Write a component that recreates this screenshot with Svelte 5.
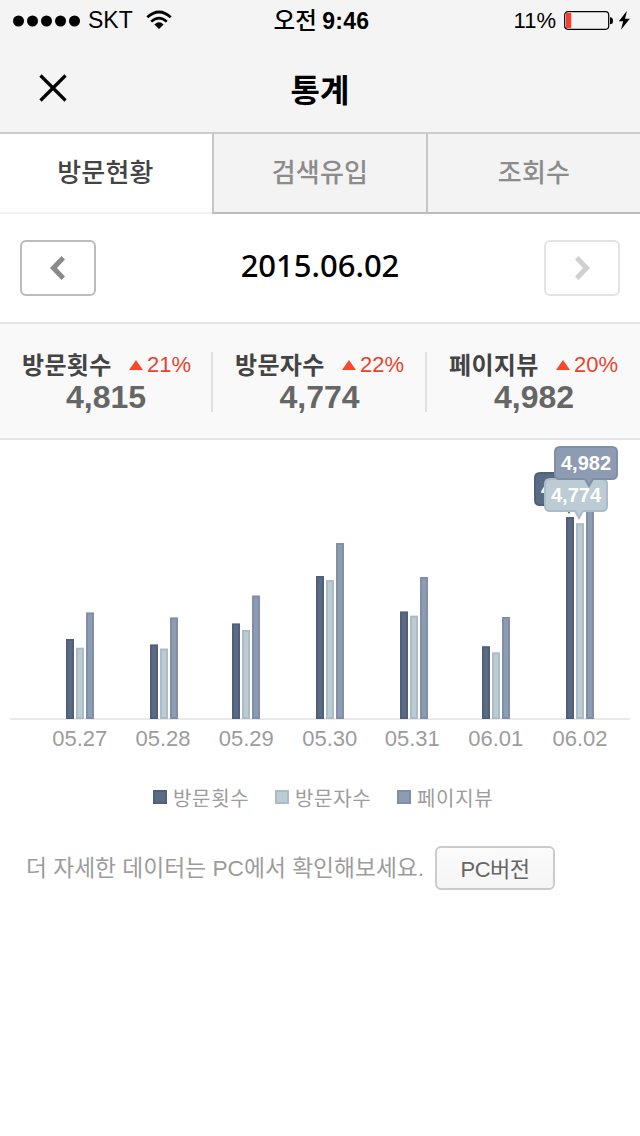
<script>
    const tabs = ['방문현황', '검색유입', '조회수'];
    let activeTab = $state(0);

    const summary = [
        { label: '방문횟수', rate: 21, value: '4,815' },
        { label: '방문자수', rate: 22, value: '4,774' },
        { label: '페이지뷰', rate: 20, value: '4,982' }
    ];

    const series = [
        { name: '방문횟수', fill: '#5b6a85', stroke: '#4f607b' },
        { name: '방문자수', fill: '#bccbd4', stroke: '#a9bcc7' },
        { name: '페이지뷰', fill: '#8e9cb3', stroke: '#7f8fa6' }
    ];

    // bar heights in chart units, one per series
    const days = [
        { date: '05.27', x: 66, label: 79.7, bars: [80, 71.3, 106.6] },
        { date: '05.28', x: 150, label: 163, bars: [74.6, 70.5, 101.6] },
        { date: '05.29', x: 232, label: 246.3, bars: [95.6, 89, 123.5] },
        { date: '05.30', x: 316, label: 329.7, bars: [143, 139, 176] },
        { date: '05.31', x: 400, label: 412.3, bars: [107.6, 103.4, 142] },
        { date: '06.01', x: 482, label: 495.7, bars: [72.8, 66.7, 102] },
        { date: '06.02', x: 566, label: 580, bars: [202, 195.8, 228] }
    ];

    const tips = [
        { x: 534, y: 32, value: '4,815', series: 0 },
        { x: 544, y: 38, value: '4,774', series: 1 },
        { x: 554, y: 6, value: '4,982', series: 2 }
    ];

    const base = 279;
    const tipPath = 'M6 1H58Q63 1 63 6V28Q63 33 58 33H39L35 40L31 33H6Q1 33 1 28V6Q1 1 6 1Z';
</script>

<div class="page">
    <header>
        <div class="status">
            <div class="carrier">
                <svg width="68" height="12" viewBox="0 0 68 12">
                    {#each [0, 1, 2, 3, 4] as i}
                        <circle cx={5.5 + i * 14} cy="6" r="5.5" />
                    {/each}
                </svg>
                <span class="skt">SKT</span>
                <svg class="wifi" width="26" height="20" viewBox="0 0 26 20">
                    <path d="M1.3 7.2Q13 -3.2 24.7 7.2" fill="none" stroke="#000" stroke-width="2.8" />
                    <path d="M5.2 11.6Q13 4.6 20.8 11.6" fill="none" stroke="#000" stroke-width="2.6" />
                    <path d="M8.4 14.4Q13 10.2 17.6 14.4L13 19Z" />
                </svg>
            </div>
            <div class="time">오전 <b>9:46</b></div>
            <div class="power">
                <span>11%</span>
                <svg width="66" height="22" viewBox="0 0 66 22">
                    <rect x="0.7" y="1.7" width="44" height="17.6" rx="3.2" fill="none" stroke="#000" stroke-width="1.2" />
                    <rect x="2" y="3" width="5.2" height="15" fill="#ff3b30" />
                    <path d="M46 7.2Q49 7.2 49 10.7Q49 14.2 46 14.2Z" />
                    <path d="M63 .7L54.8 11.3H59.2L57 19.7L65.8 8.8H61Z" />
                </svg>
            </div>
        </div>
        <div class="title">
            <button class="close" aria-label="닫기">
                <svg width="28" height="28" viewBox="0 0 28 28">
                    <path d="M1.5 1.5L26.5 26.5M26.5 1.5L1.5 26.5" stroke="#000" stroke-width="3.2" />
                </svg>
            </button>
            <h1>통계</h1>
        </div>
    </header>

    <nav>
        {#each tabs as tab, i}
            <button class="tab" class:active={activeTab === i} onclick={() => (activeTab = i)}>{tab}</button>
        {/each}
    </nav>

    <div class="date">
        <button class="arrow" aria-label="이전">
            <svg width="15" height="24" viewBox="0 0 15 24">
                <path d="M11.5 0L0 12L11.5 24L15 20.5L7 12L15 3.5Z" fill="#8a8a8a" />
            </svg>
        </button>
        <span>2015.06.02</span>
        <button class="arrow next" aria-label="다음">
            <svg width="15" height="24" viewBox="0 0 15 24">
                <path d="M3.5 0L15 12L3.5 24L0 20.5L8 12L0 3.5Z" fill="#cfcfcf" />
            </svg>
        </button>
    </div>

    <div class="summary">
        {#each summary as item}
            <div class="item">
                <div class="head">
                    <strong>{item.label}</strong>
                    <svg width="14" height="10" viewBox="0 0 14 10"><path d="M7 0L14 10H0Z" fill="#f7482a" /></svg>
                    <span class="rate">{item.rate}%</span>
                </div>
                <div class="value">{item.value}</div>
            </div>
        {/each}
    </div>

    <svg class="chart" width="640" height="320" viewBox="0 0 640 320">
        <rect x="10" y="278" width="620" height="2" fill="#e9e9e9" />
        {#each days as day}
            {#each day.bars as h, i}
                <rect x={day.x + i * 10} y={base - h} width="8" height={h} fill={series[i].stroke} />
                <rect x={day.x + i * 10 + 2} y={base - h + 2} width="4" height={h - 4} fill={series[i].fill} />
            {/each}
            <text class="day" x={day.label} y="305.5">{day.date}</text>
        {/each}
        {#each tips as tip}
            <g transform="translate({tip.x} {tip.y})">
                <path d={tipPath} fill={series[tip.series].fill} stroke={series[tip.series].stroke} stroke-width="2" />
                <text class="tip" x="32" y="24">{tip.value}</text>
            </g>
        {/each}
    </svg>

    <div class="legend">
        {#each series as s}
            <div class="key">
                <svg width="14" height="14"><rect x="1" y="1" width="12" height="12" fill={s.fill} stroke={s.stroke} stroke-width="2" /></svg>
                <span>{s.name}</span>
            </div>
        {/each}
    </div>

    <footer>
        <p>더 자세한 데이터는 PC에서 확인해보세요.</p>
        <button>PC버전</button>
    </footer>
</div>

<style>
    :global(body) {
        margin: 0;
        background: #fff;
    }

    .page {
        width: 640px;
        height: 1136px;
        overflow: hidden;
        background: #fff;
        font-family: "Liberation Sans", "Noto Sans CJK KR", sans-serif;
    }

    svg {
        display: block;
        flex: none;
    }

    button {
        margin: 0;
        padding: 0;
        border: 0;
        background: none;
        font-family: inherit;
        box-sizing: border-box;
    }

    header {
        height: 132px;
        background: #f4f4f4;
        border-bottom: 2px solid #ccc;
    }

    .status {
        display: grid;
        grid-template-columns: 1fr auto 1fr;
        align-items: center;
        height: 41px;
        padding: 0 10px 0 13px;
        font-size: 22px;
        line-height: 41px;
    }

    .carrier,
    .power {
        display: flex;
        align-items: center;
    }

    .skt {
        margin-left: 7px;
        font-size: 23px;
    }

    .wifi {
        margin: 0 0 2px 13px;
    }

    .time {
        height: 41px;
        font-family: "Noto Sans CJK KR", sans-serif;
        font-size: 23.5px;
        font-weight: 500;
        line-height: 39px;
    }

    .time b {
        font-family: "Liberation Sans", sans-serif;
        font-size: 23px;
        letter-spacing: 0.3px;
    }

    .power {
        justify-content: flex-end;
    }

    .power span {
        margin-right: 8px;
    }

    .title {
        display: grid;
        grid-template-columns: 106px 1fr 106px;
        align-items: center;
        height: 91px;
    }

    .close {
        justify-self: center;
        margin-top: 2px;
    }

    h1 {
        margin: 2px 0 0;
        text-align: center;
        font-family: "Noto Sans CJK KR", sans-serif;
        font-size: 32px;
        font-weight: 700;
        line-height: 46px;
    }

    nav {
        display: grid;
        grid-template-columns: 212px 214px 214px;
        height: 80px;
    }

    .tab {
        padding: 0 0 6px;
        border-left: 2px solid #c6c6c6;
        border-bottom: 2px solid #bbb;
        background: #f3f3f3;
        color: #8c8c8c;
        font-family: "Noto Sans CJK KR", sans-serif;
        font-size: 26px;
        font-weight: 500;
        letter-spacing: 0.2px;
    }

    .tab:first-child {
        padding-right: 1px;
        border-left: 0;
    }

    .tab.active {
        background: #fff;
        border-bottom-color: #f3f3f3;
        color: #444;
    }

    .date {
        display: flex;
        justify-content: space-between;
        align-items: center;
        height: 108px;
        padding: 0 20px;
        font-family: "Noto Sans", sans-serif;
        font-size: 31px;
        font-weight: 500;
    }

    .date span {
        margin-bottom: 6px;
    }

    .arrow {
        display: flex;
        justify-content: center;
        align-items: center;
        width: 76px;
        height: 56px;
        padding-right: 1px;
        border: 2px solid #bbb;
        border-radius: 6px;
    }

    .arrow.next {
        padding: 0 0 0 1px;
        border-color: #e3e3e3;
    }

    .summary {
        display: grid;
        grid-template-columns: 213px 214px 213px;
        height: 114px;
        background: #f9f9f9;
        border-top: 2px solid #e3e3e3;
        border-bottom: 2px solid #e3e3e3;
    }

    .item {
        height: 60px;
        margin-top: 28px;
        border-right: 2px solid #e0e0e0;
        box-sizing: border-box;
    }

    .item:last-child {
        border-right: 0;
    }

    .head {
        display: flex;
        align-items: center;
        height: 26px;
        padding-left: 22px;
    }

    .head strong {
        width: 107px;
        margin-bottom: 3px;
        color: #444;
        font-family: "Noto Sans CJK KR", sans-serif;
        font-size: 24px;
        font-weight: 700;
        letter-spacing: 0.3px;
        line-height: 26px;
    }

    .rate {
        margin-left: 4px;
        color: #e8442c;
        font-size: 22px;
    }

    .value {
        padding-left: 1px;
        color: #666;
        font-size: 32px;
        font-weight: bold;
        line-height: 38px;
        text-align: center;
    }

    .day {
        fill: #9c9c9c;
        font-size: 22px;
        text-anchor: middle;
    }

    .tip {
        fill: #fff;
        font-size: 20px;
        font-weight: bold;
        text-anchor: middle;
    }

    .legend {
        display: flex;
        padding-left: 153px;
        margin-top: 22px;
        height: 30px;
        color: #9c9c9c;
        font-family: "Noto Sans CJK KR", sans-serif;
        font-size: 20px;
        letter-spacing: 0.7px;
        line-height: 30px;
    }

    .key {
        display: flex;
        align-items: center;
        width: 122px;
    }

    .key span {
        margin: 2px 0 0 6px;
    }

    footer {
        display: flex;
        align-items: center;
        height: 44px;
        margin-top: 34px;
        padding-left: 26px;
    }

    p {
        width: 409px;
        margin: 0;
        color: #9c9c9c;
        font-size: 22.75px;
        line-height: 44px;
        white-space: nowrap;
    }

    footer button {
        width: 120px;
        height: 44px;
        padding-bottom: 3px;
        border: 2px solid #ccc;
        border-radius: 6px;
        background: linear-gradient(#fbfbfb, #f5f5f5);
        color: #666;
        font-size: 22px;
        letter-spacing: -0.5px;
    }
</style>
